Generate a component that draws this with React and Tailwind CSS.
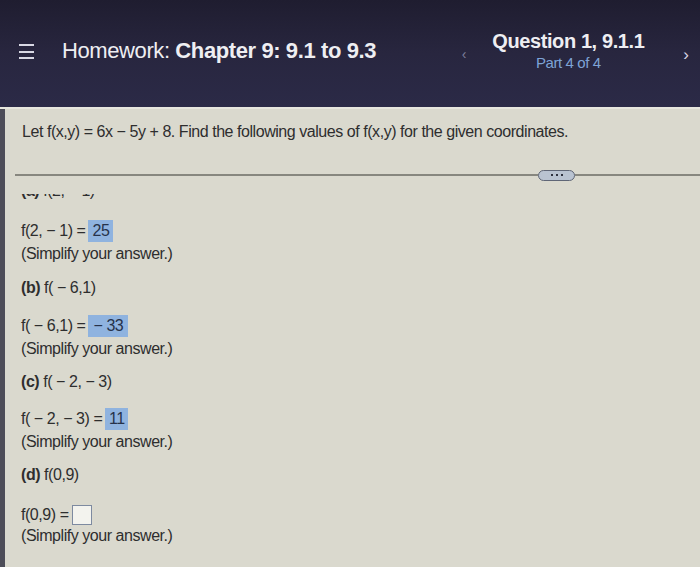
import React from "react";

const font = { fontFamily: '"Liberation Sans", Arial, sans-serif' };

function Box({ children, w }) {
  return (
    <span className={`inline-flex items-center justify-center h-[22px] bg-[#8fb3df] text-[#26324a] px-[3px] ${w}`}>
      {children}
    </span>
  );
}

function Eq({ children, ans }) {
  return (
    <div className="flex items-center h-[24px] gap-[3px]">
      <span>{children}</span>
      {ans}
    </div>
  );
}

function Simplify() {
  return <div className="h-[22px] leading-[22px]">(Simplify your answer.)</div>;
}

export default function App() {
  return (
    <div className="w-[700px] h-[567px] overflow-hidden bg-[#dad9ce] flex flex-col" style={font}>
      <header className="h-[107px] shrink-0 bg-gradient-to-b from-[#1f1d30] via-[#28263f] to-[#2b2a47] flex items-center pl-[19px] pr-[11px] text-[#eeeef2]">
        <div className="flex flex-col gap-[4.5px] w-[15px] mr-[28px] mt-[-4px]">
          <div className="h-[2px] bg-[#d8d8e4]" />
          <div className="h-[2px] bg-[#d8d8e4]" />
          <div className="h-[2px] bg-[#d8d8e4]" />
        </div>
        <div className="flex-1 text-[22px] tracking-[-0.4px] mt-[-6px]">
          Homework: <span className="font-bold">Chapter 9: 9.1 to 9.3</span>
        </div>
        <div className="text-[#7d7f9a] text-[14px] mt-[2px]">‹</div>
        <div className="ml-[22px] w-[160px] flex flex-col items-center mt-[-6px]">
          <div className="text-[20px] font-bold tracking-[-0.4px] leading-[24px]">Question 1, 9.1.1</div>
          <div className="text-[15px] text-[#7ea3d6] tracking-[-0.4px] leading-[19px]">Part 4 of 4</div>
        </div>
        <div className="ml-[35px] text-[#d8d8e4] text-[17px] mt-[2px]">›</div>
      </header>
      <div className="flex-1 flex border-t-[2px] border-[#e6e6de]">
        <div className="w-[5px] bg-[#4d4d58] shrink-0" />
        <div className="flex-1 flex flex-col text-[#2e2e2e] text-[16px] tracking-[-0.45px]">
          <div className="pl-[17px] pt-[11px] h-[60px]">
            Let f(x,y) = 6x − 5y + 8. Find the following values of f(x,y) for the given coordinates.
          </div>
          <div className="flex items-center h-[12px] pl-[10px]">
            <div className="w-[523px] h-[2px] bg-[#87877f]" />
            <div className="w-[37px] h-[11px] rounded-full bg-[#b9c3d1] border border-[#5f6676] flex items-center justify-center gap-[3px]">
              <span className="w-[2px] h-[2px] bg-[#2f3340]" />
              <span className="w-[2px] h-[2px] bg-[#2f3340]" />
              <span className="w-[2px] h-[2px] bg-[#2f3340]" />
            </div>
            <div className="flex-1 h-[2px] bg-[#87877f]" />
          </div>
          <div className="pl-[16px] flex flex-col">
            <div className="h-[6px] mt-[13px] overflow-hidden">
              <div className="-mt-[12px] leading-[18px]"><span className="font-bold">(a)</span> f(2, − 1)</div>
            </div>
            <div className="mt-[19px]">
              <Eq ans={<Box w="w-[25px]">25</Box>}>f(2, − 1) =</Eq>
            </div>
            <Simplify />
            <div className="mt-[12px] h-[22px] leading-[22px]"><span className="font-bold">(b)</span> f( − 6,1)</div>
            <div className="mt-[15px]">
              <Eq ans={<Box w="w-[40px]">− 33</Box>}>f( − 6,1) =</Eq>
            </div>
            <Simplify />
            <div className="mt-[11px] h-[22px] leading-[22px]"><span className="font-bold">(c)</span> f( − 2, − 3)</div>
            <div className="mt-[14px]">
              <Eq ans={<Box w="w-[23px]">11</Box>}>f( − 2, − 3) =</Eq>
            </div>
            <Simplify />
            <div className="mt-[11px] h-[22px] leading-[22px]"><span className="font-bold">(d)</span> f(0,9)</div>
            <div className="mt-[17px]">
              <Eq ans={<span className="inline-block w-[20px] h-[20px] bg-[#f3f3ee] border border-[#7d8aa0]" />}>f(0,9) =</Eq>
            </div>
            <div className="-mt-[2px]"><Simplify /></div>
          </div>
        </div>
      </div>
    </div>
  );
}
